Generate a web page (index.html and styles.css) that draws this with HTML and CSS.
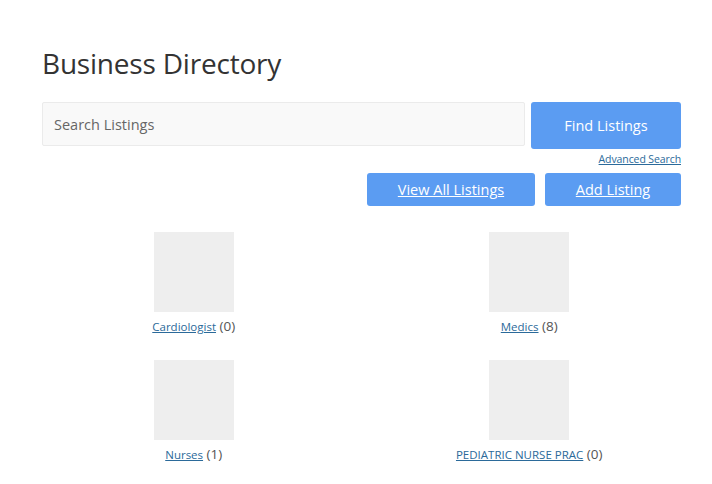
FILE: index.html
```html
<!DOCTYPE html>
<html>
<head>
<meta charset="utf-8">
<link rel="stylesheet" href="styles.css">
</head>
<body>
<div class="page">
  <h1 class="title">Business Directory</h1>
  <form class="search">
    <input class="search-input" type="text" placeholder="Search Listings">
    <div class="search-side">
      <button class="btn btn-find" type="button">Find Listings</button>
      <a class="adv" href="#">Advanced Search</a>
    </div>
  </form>
  <div class="actions">
    <a class="btn btn-act btn-view" href="#">View All Listings</a>
    <a class="btn btn-act btn-add" href="#">Add Listing</a>
  </div>
  <div class="cats">
    <div class="cat"><div class="thumb"></div><div class="cat-label"><a href="#">Cardiologist</a> (0)</div></div>
    <div class="cat"><div class="thumb"></div><div class="cat-label"><a href="#">Medics</a> (8)</div></div>
    <div class="cat"><div class="thumb"></div><div class="cat-label"><a href="#">Nurses</a> (1)</div></div>
    <div class="cat"><div class="thumb"></div><div class="cat-label"><a href="#">PEDIATRIC NURSE PRAC</a> (0)</div></div>
  </div>
</div>
</body>
</html>
```

FILE: styles.css
```css
html, body {
  margin: 0;
  padding: 0;
  background: #ffffff;
}
body {
  font-family: "Open Sans", "Noto Sans", sans-serif;
  color: #333;
}
.page {
  padding: 0 31px 0 42px;
}
.title {
  margin: 0;
  padding-top: 43px;
  font-size: 28px;
  font-weight: 400;
  line-height: 40px;
  color: #333;
  letter-spacing: -0.2px;
}
.search {
  display: flex;
  gap: 6px;
  margin-top: 19px;
}
.search-input {
  flex: 1;
  box-sizing: border-box;
  height: 44px;
  margin: 0;
  border: 1px solid #ebebeb;
  border-radius: 2px;
  background: #f9f9f9;
  padding: 0 11px;
  font-family: "Open Sans", "Noto Sans", sans-serif;
  font-size: 14.5px;
  color: #333;
  outline: none;
}
.search-input::placeholder {
  color: #666;
}
.search-side {
  display: flex;
  flex-direction: column;
  align-items: flex-end;
  width: 150px;
}
.btn {
  box-sizing: border-box;
  background: #5b9cf2;
  color: #fff;
  border: none;
  border-radius: 3px;
  font-family: "Open Sans", "Noto Sans", sans-serif;
  font-size: 14.5px;
  display: flex;
  align-items: center;
  justify-content: center;
}
.btn-find {
  width: 150px;
  height: 47px;
  margin: 0;
  padding: 0 0 1px;
}
.adv {
  margin-top: 3px;
  font-size: 10.5px;
  line-height: 14px;
  color: #2b6a9a;
  letter-spacing: -0.1px;
}
.actions {
  display: flex;
  justify-content: flex-end;
  gap: 10px;
  margin-top: 7px;
}
.btn-act {
  height: 33px;
  text-decoration: underline;
  padding-bottom: 1px;
}
.btn-view { width: 168px; }
.btn-add { width: 136px; }
.cats {
  display: grid;
  grid-template-columns: 1fr 1fr;
  margin: 26px -16px 0 -16px;
  row-gap: 23px;
}
.cat {
  display: flex;
  flex-direction: column;
  align-items: center;
}
.thumb {
  width: 80px;
  height: 80px;
  background: #eeeeee;
}
.cat-label {
  margin-top: 4px;
  font-size: 13.5px;
  line-height: 20px;
  color: #555;
}
.cat-label a {
  color: #2b6a9a;
  font-size: 11.5px;
}
```
